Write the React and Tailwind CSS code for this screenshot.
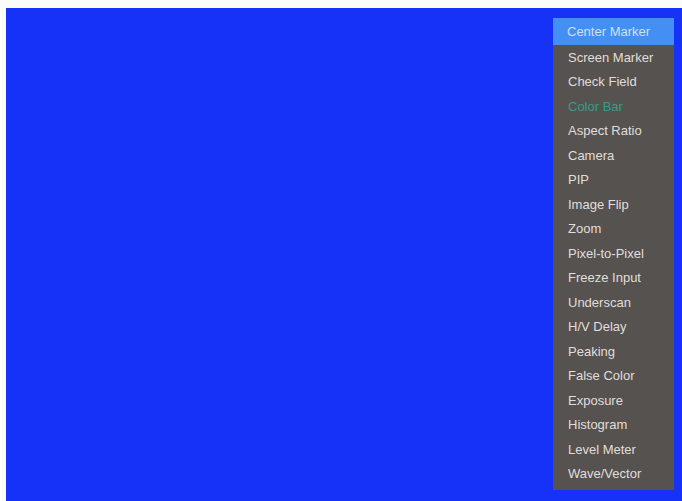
import React from "react";

const items = [
  "Center Marker",
  "Screen Marker",
  "Check Field",
  "Color Bar",
  "Aspect Ratio",
  "Camera",
  "PIP",
  "Image Flip",
  "Zoom",
  "Pixel-to-Pixel",
  "Freeze Input",
  "Underscan",
  "H/V Delay",
  "Peaking",
  "False Color",
  "Exposure",
  "Histogram",
  "Level Meter",
  "Wave/Vector",
];

const MenuItem = ({ label, index }) => {
  if (index === 0) {
    return (
      <div className="h-[27px] flex items-center pl-[14px] bg-[#438ff3] text-[#cfe0f7]">
        {label}
      </div>
    );
  }
  const color = label === "Color Bar" ? "text-[#3a9a88]" : "text-[#e0dedc]";
  return (
    <div className={`h-[24.5px] flex items-center pl-[15px] ${color}`}>
      {label}
    </div>
  );
};

const App = () => {
  return (
    <div className="w-[682px] h-[501px] bg-[#fbfbf8] pt-[8px] pl-[6px] flex overflow-hidden">
      <div className="flex-1 bg-[#1732f7] flex justify-end items-start">
        <div
          className="mt-[10px] mr-[8px] w-[121px] bg-[#56524f] pb-[4px] text-[13px] leading-none"
          style={{ fontFamily: '"Liberation Sans", Arial, sans-serif' }}
        >
          {items.map((label, i) => (
            <MenuItem key={label} label={label} index={i} />
          ))}
        </div>
      </div>
    </div>
  );
};

export default App;
